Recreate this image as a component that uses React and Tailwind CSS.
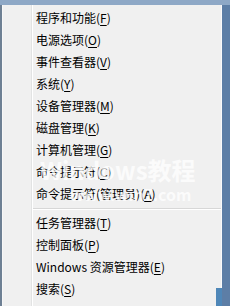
import React from "react";

const top = [
  ["程序和功能", "F"],
  ["电源选项", "O"],
  ["事件查看器", "V"],
  ["系统", "Y"],
  ["设备管理器", "M"],
  ["磁盘管理", "K"],
  ["计算机管理", "G"],
  ["命令提示符", "C"],
  ["命令提示符(管理员)", "A"],
];
const bottom = [
  ["任务管理器", "T"],
  ["控制面板", "P"],
  ["Windows 资源管理器", "E"],
  ["搜索", "S"],
];

function Item({ label, k }) {
  return (
    <div className="h-[22px] flex items-center pl-[3px] text-[12px] leading-none text-black whitespace-nowrap">
      <span>{label}(</span>
      <span className="underline underline-offset-2">{k}</span>
      <span>)</span>
    </div>
  );
}

export default function App() {
  return (
    <div
      className="w-[230px] h-[306px] bg-[#6f8fb5] flex flex-col overflow-hidden relative"
      style={{ fontFamily: '"Noto Sans CJK SC", "Noto Sans", sans-serif' }}
    >
      <div className="h-[5px] bg-[#8ea8c6] shrink-0" />
      <div className="flex flex-1">
        <div className="w-[2px] bg-[#6e8094]" />
        <div className="w-[220px] bg-[#f0f0f0] flex border-l border-[#f7f7f7] border-r border-r-[#fafafa]">
          <div className="w-[29px] shrink-0 border-r border-[#e2e3e3]" />
          <div className="flex-1 flex flex-col pt-[2px] border-l border-white">
            {top.map(([l, k]) => (
              <Item key={l} label={l} k={k} />
            ))}
            <div className="h-[7px] flex flex-col justify-center">
              <div className="h-px bg-[#d7d7d7]" />
              <div className="h-px bg-white" />
            </div>
            {bottom.map(([l, k]) => (
              <Item key={l} label={l} k={k} />
            ))}
          </div>
        </div>
        <div className="flex-1 bg-[#5d7ea6]" />
      </div>
      <div className="absolute left-[40px] top-[158px] text-[24px] font-bold text-white/75 leading-none whitespace-nowrap">
        Windows教程
      </div>
      <div className="absolute left-[70px] top-[186px] text-[16px] font-bold text-white/75 leading-none whitespace-nowrap">
        www.win7.com
      </div>
      <div className="absolute left-[216px] top-[288px] w-[6px] h-[18px] bg-[#4f87b8]" />
    </div>
  );
}
